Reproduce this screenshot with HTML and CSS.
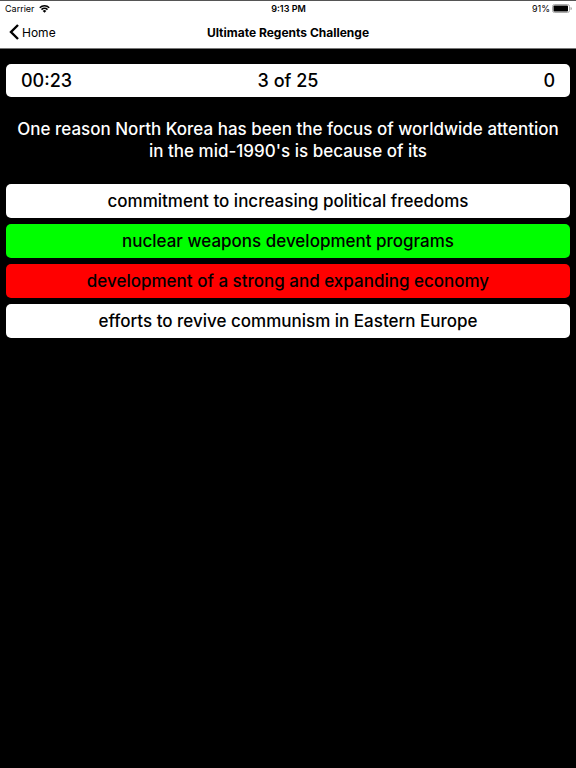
FILE: index.html
```html
<!DOCTYPE html>
<html lang="en">
  <head>
    <meta charset="UTF-8" />
    <meta name="viewport" content="width=device-width, initial-scale=1.0" />
    <title>Ultimate Regents Challenge</title>
    <link rel="stylesheet" href="styles.css">
  </head>
  <body>
    <header class="top">
      <div class="status-bar">
        <div class="carrier">
          <span>Carrier</span>
          <svg class="wifi" viewBox="0 0 22 16" aria-hidden="true">
            <path d="M1.5 5.6a13.5 13.5 0 0 1 19 0" />
            <path d="M5 9.2a8.5 8.5 0 0 1 12 0" />
            <path class="dot" d="M11 15.5l-3.6-3.7a5.2 5.2 0 0 1 7.2 0z" />
          </svg>
        </div>
        <span class="clock">9:13 PM</span>
        <div class="power">
          <span>91%</span>
          <svg class="battery" viewBox="0 0 40 18" aria-hidden="true">
            <rect class="case" x="1" y="1" width="34" height="16" rx="4" />
            <rect x="3" y="3" width="29" height="12" rx="1.5" />
            <path class="tip" d="M37 6a3 3 0 0 1 0 6z" />
          </svg>
        </div>
      </div>
      <nav class="nav-bar">
        <a href="#" class="back">
          <svg class="chevron" viewBox="0 0 10 16" aria-hidden="true">
            <path d="M9 1L2 8l7 7" />
          </svg>
          <span>Home</span>
        </a>
        <h1>Ultimate Regents Challenge</h1>
      </nav>
    </header>

    <main class="quiz">
      <div class="score-bar">
        <span class="timer">00:23</span>
        <span class="progress">3 of 25</span>
        <span class="score">0</span>
      </div>
      <h2 class="question">One reason North Korea has been the focus of worldwide attention in the mid-1990's is because of its</h2>
      <div class="answers">
        <button type="button" class="answer">commitment to increasing political freedoms</button>
        <button type="button" class="answer correct">nuclear weapons development programs</button>
        <button type="button" class="answer wrong">development of a strong and expanding economy</button>
        <button type="button" class="answer">efforts to revive communism in Eastern Europe</button>
      </div>
    </main>
  </body>
</html>
```
FILE: styles.css
```css
* {
  margin: 0;
  padding: 0;
  box-sizing: border-box;
  font-family: Inter, "Liberation Sans", sans-serif;
}
body {
  min-height: 100vh;
  background: #000;
  color: #000;
}

/* status bar + navigation */
.top {
  background: #fff;
  border-top: 1px solid #555;
  border-bottom: 1px solid #777;
}
.status-bar,
.nav-bar,
.score-bar {
  display: grid;
  grid-template-columns: 1fr auto 1fr;
  align-items: center;
}
.status-bar {
  height: 15px;
  padding: 0 4px 0 5px;
  font-size: 9px;
}
.carrier,
.power {
  display: flex;
  align-items: center;
  gap: 4px;
}
.power {
  justify-content: flex-end;
  gap: 2px;
}
.clock {
  font-weight: 600;
}
.wifi {
  width: 11px;
  height: 8px;
}
.wifi path {
  fill: none;
  stroke: #000;
  stroke-width: 3;
}
.wifi .dot {
  fill: #000;
  stroke: none;
}
.battery {
  width: 20px;
  height: 9px;
}
.battery .case {
  fill: none;
  stroke: #aaa;
  stroke-width: 2;
}
.battery .tip {
  fill: #aaa;
}
.nav-bar {
  height: 32px;
  padding: 0 9px;
  font-size: 12px;
}
.nav-bar h1 {
  font-size: 12px;
  font-weight: 700;
}
.back {
  display: flex;
  align-items: center;
  gap: 3px;
  color: #000;
  text-decoration: none;
}
.chevron {
  width: 10px;
  height: 16px;
}
.chevron path {
  fill: none;
  stroke: #000;
  stroke-width: 2.4;
}

/* quiz */
.quiz {
  padding: 15px 6px;
}
.score-bar {
  height: 33px;
  padding: 0 15px;
  border-radius: 5px;
  background: #fff;
  font-size: 18px;
  font-weight: 500;
}
.score {
  text-align: right;
}
.question {
  padding: 21px 8px 22px;
  color: #fff;
  font-size: 17px;
  font-weight: 500;
  line-height: 22px;
  text-align: center;
}
.answers {
  display: grid;
  gap: 6px;
}
.answer {
  min-height: 34px;
  border: none;
  border-radius: 5px;
  background: #fff;
  color: #000;
  font-size: 17px;
  font-weight: 500;
  cursor: pointer;
}
.correct {
  background: #00ff00;
}
.wrong {
  background: #ff0000;
}
```
